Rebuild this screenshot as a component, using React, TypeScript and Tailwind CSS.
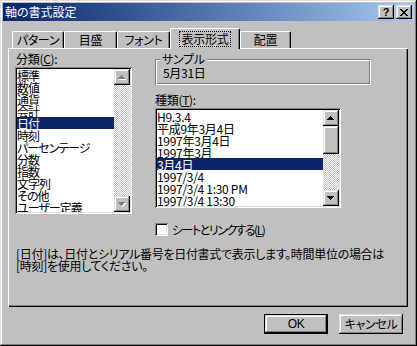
import React from 'react';

// classic 3D edges
const raised =
  'shadow-[inset_-1px_-1px_#000,inset_1px_1px_#dfdfdf,inset_-2px_-2px_#808080,inset_2px_2px_#fff]';
const sunken =
  'shadow-[inset_1px_1px_#808080,inset_-1px_-1px_#fff,inset_2px_2px_#000,inset_-2px_-2px_#dfdfdf]';
const etched =
  'shadow-[inset_1px_1px_#808080,inset_-1px_-1px_#fff,inset_2px_2px_#fff,inset_-2px_-2px_#808080]';
const checker =
  'bg-[repeating-conic-gradient(#fff_0_25%,#c0c0c0_0_50%)] bg-[length:2px_2px]';

const categories = [
  '標準',
  '数値',
  '通貨',
  '会計',
  '日付',
  '時刻',
  'パーセンテージ',
  '分数',
  '指数',
  '文字列',
  'その他',
  'ユーザー定義',
];

const types = [
  'H9.3.4',
  '平成9年3月4日',
  '1997年3月4日',
  '1997年3月',
  '3月4日',
  '1997/3/4',
  '1997/3/4 1:30 PM',
  '1997/3/4 13:30',
];

const Arrow = ({ up, disabled }: { up: boolean; disabled?: boolean }) => {
  const d = up
    ? 'M3 0h1v1h-1z M2 1h3v1h-3z M1 2h5v1h-5z M0 3h7v1h-7z'
    : 'M0 0h7v1h-7z M1 1h5v1h-5z M2 2h3v1h-3z M3 3h1v1h-1z';
  return (
    <svg width="8" height="5" viewBox="0 0 8 5" shapeRendering="crispEdges">
      {disabled && <path d={d} fill="#fff" transform="translate(1 1)" />}
      <path d={d} fill={disabled ? '#808080' : '#000'} />
    </svg>
  );
};

const ScrollBtn = ({ up, disabled }: { up: boolean; disabled?: boolean }) => (
  <div className={`w-[16px] h-[16px] shrink-0 bg-[#c0c0c0] flex items-center justify-center ${raised}`}>
    <Arrow up={up} disabled={disabled} />
  </div>
);

const Tab = ({ label, w }: { label: string; w: string }) => (
  <div
    className={`${w} h-[17px] flex items-center justify-center border-l border-t border-r border-l-white border-t-white border-r-black rounded-tl-[2px] rounded-tr-[2px] shadow-[inset_-1px_0_#808080]`}
  >
    {label}
  </div>
);

const App = () => {
  return (
    <div
      className={`w-[417px] h-[346px] bg-[#c0c0c0] p-[3px] text-[12px] leading-[12px] tracking-[-0.3px] text-black font-['Noto_Sans_CJK_JP','Noto_Sans_CJK_SC',sans-serif] [font-feature-settings:'palt'] ${raised}`}
    >
      {/* Title bar */}
      <div className="h-[18px] flex items-center justify-between bg-gradient-to-r from-[#0a246a] to-[#a6caf0]">
        <span className="pl-[2px] text-white tracking-normal">軸の書式設定</span>
        <div className="flex gap-[2px] pr-[2px]">
          <div className={`w-[16px] h-[14px] bg-[#c0c0c0] flex items-center justify-center font-bold text-[11px] font-['Liberation_Sans',sans-serif] ${raised}`}>
            ?
          </div>
          <div className={`w-[16px] h-[14px] bg-[#c0c0c0] flex items-center justify-center ${raised}`}>
            <svg width="8" height="7" viewBox="0 0 8 7" shapeRendering="crispEdges">
              <path
                d="M0 0h2v1h-2z M6 0h2v1h-2z M1 1h2v1h-2z M5 1h2v1h-2z M2 2h4v1h-4z M3 3h2v1h-2z M2 4h4v1h-4z M1 5h2v1h-2z M5 5h2v1h-2z M0 6h2v1h-2z M6 6h2v1h-2z"
                fill="#000"
              />
            </svg>
          </div>
        </div>
      </div>

      {/* Tabs */}
      <div className="flex items-end h-[20px] mt-[7px] pl-[9px]">
        <Tab label="パターン" w="w-[52px]" />
        <Tab label="目盛" w="w-[53px]" />
        <Tab label="フォント" w="w-[53px]" />
        <div className="relative z-10 w-[70px] h-[21px] -mb-[1px] bg-[#c0c0c0] flex items-start justify-center pt-[2px] border-l border-t border-r border-l-white border-t-white border-r-black rounded-tl-[2px] rounded-tr-[2px] shadow-[inset_-1px_0_#808080]">
          <span className="border border-dotted border-black px-[2px] py-[1px]">表示形式</span>
        </div>
        <Tab label="配置" w="w-[51px]" />
      </div>

      {/* Panel */}
      <div className="ml-[5px] w-[400px] h-[259px] pl-[7px] pt-[4px] shadow-[inset_1px_1px_#fff,inset_-1px_-1px_#000,inset_-2px_-2px_#808080]">
        <div className="flex">
          {/* Category list */}
          <div className="w-[117px]">
            <div className="h-[15px] pl-[1px] pt-[1px]">
              分類(<span className="underline">C</span>):
            </div>
            <div className={`h-[147px] bg-white p-[2px] flex ${sunken}`}>
              <div className="flex-1 overflow-hidden tracking-[-1px]">
                {categories.map((c) => (
                  <div
                    key={c}
                    className={`h-[12px] leading-[14px] whitespace-nowrap ${c === '日付' ? 'bg-[#0a246a] text-white' : ''}`}
                  >
                    {c}
                  </div>
                ))}
              </div>
              <div className="w-[16px] flex flex-col">
                <ScrollBtn up disabled />
                <div className={`flex-1 ${checker}`} />
                <ScrollBtn up={false} disabled />
              </div>
            </div>
          </div>

          {/* Right column */}
          <div className="ml-[23px]">
            <div className={`relative mt-[7px] w-[216px] h-[26px] pl-[8px] pt-[8px] ${etched}`}>
              <span className="absolute -top-[6px] left-[5px] px-[2px] bg-[#c0c0c0]">サンプル</span>
              5月31日
            </div>
            <div className="h-[15px] mt-[8px] pt-[1px]">
              種類(<span className="underline">T</span>):
            </div>
            <div className={`w-[186px] h-[100px] bg-white p-[2px] flex ${sunken}`}>
              <div className="flex-1 overflow-hidden">
                {types.map((t) => (
                  <div
                    key={t}
                    className={`h-[12px] leading-[14px] whitespace-nowrap ${t === '3月4日' ? 'bg-[#0a246a] text-white' : ''}`}
                  >
                    {t}
                  </div>
                ))}
              </div>
              <div className="w-[16px] flex flex-col">
                <ScrollBtn up />
                <div className={`h-[28px] shrink-0 bg-[#c0c0c0] ${raised}`} />
                <div className={`flex-1 ${checker}`} />
                <ScrollBtn up={false} />
              </div>
            </div>
          </div>
        </div>

        {/* Checkbox */}
        <div className="flex items-center gap-[4px] mt-[9px] ml-[140px] h-[13px]">
          <div className={`w-[13px] h-[13px] bg-white ${sunken}`} />
          <span className="tracking-[-1.5px]">
            シートとリンクする(<span className="underline">L</span>)
          </span>
        </div>

        {/* Description */}
        <div className="mt-[12px] pl-[1px]">
          <div>[日付]は、日付とシリアル番号を日付書式で表示します。時間単位の場合は</div>
          <div>[時刻]を使用してください。</div>
        </div>
      </div>

      {/* Buttons */}
      <div className="flex justify-end gap-[11px] pr-[11px] mt-[7px]">
        <div className="w-[64px] h-[20px] border border-black">
          <div className={`w-full h-full flex items-center justify-center font-['Liberation_Sans',sans-serif] ${raised}`}>
            OK
          </div>
        </div>
        <div className={`w-[64px] h-[20px] flex items-center justify-center ${raised}`}>キャンセル</div>
      </div>
    </div>
  );
};

export default App;
